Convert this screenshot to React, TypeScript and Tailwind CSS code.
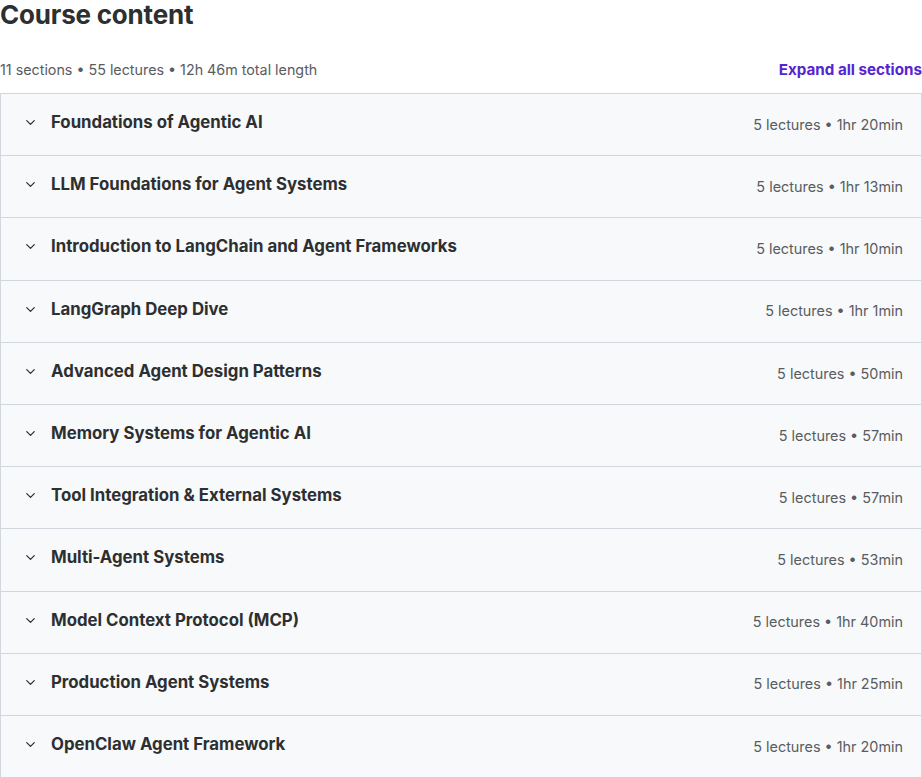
import { ChevronDown } from 'lucide-react';

const sections = [
  { title: 'Foundations of Agentic AI', meta: '5 lectures • 1hr 20min' },
  { title: 'LLM Foundations for Agent Systems', meta: '5 lectures • 1hr 13min' },
  { title: 'Introduction to LangChain and Agent Frameworks', meta: '5 lectures • 1hr 10min' },
  { title: 'LangGraph Deep Dive', meta: '5 lectures • 1hr 1min' },
  { title: 'Advanced Agent Design Patterns', meta: '5 lectures • 50min' },
  { title: 'Memory Systems for Agentic AI', meta: '5 lectures • 57min' },
  { title: 'Tool Integration & External Systems', meta: '5 lectures • 57min' },
  { title: 'Multi-Agent Systems', meta: '5 lectures • 53min' },
  { title: 'Model Context Protocol (MCP)', meta: '5 lectures • 1hr 40min' },
  { title: 'Production Agent Systems', meta: '5 lectures • 1hr 25min' },
  { title: 'OpenClaw Agent Framework', meta: '5 lectures • 1hr 20min' },
];

export default function App() {
  return (
    <div className="w-[922px] bg-white text-[#2d2f31] font-['Inter',sans-serif]">
      <h2 className="text-[26px] leading-[28px] font-bold tracking-[-0.2px] pt-[1px]">Course content</h2>

      <div className="flex items-end justify-between mt-[31px] mb-[13px] text-[14px] leading-[20px]">
        <span className="text-[14.3px] text-[#595c61]">11 sections • 55 lectures • 12h 46m total length</span>
        <button className="text-[15.2px] font-bold text-[#5624d0]">Expand all sections</button>
      </div>

      <div className="w-[922px] border border-[#d1d7dc] border-b-0">
        {sections.map(section => (
          <div
            key={section.title}
            className="h-[62.2px] flex items-center justify-between bg-[#f7f9fa] border-b border-[#d1d7dc] pl-[22px] pr-[18px]"
          >
            <div className="flex items-center gap-[13px] mb-[4px]">
              <ChevronDown size={15} strokeWidth={2} className="text-[#2d2f31]" />
              <span className="text-[16.8px] font-bold">{section.title}</span>
            </div>
            <span className="text-[14.4px] text-[#595c61]">{section.meta}</span>
          </div>
        ))}
      </div>
    </div>
  );
}
